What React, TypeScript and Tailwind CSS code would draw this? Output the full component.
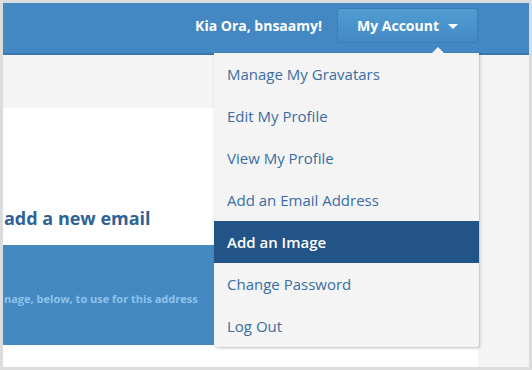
import React from "react";

const items = [
  "Manage My Gravatars",
  "Edit My Profile",
  "View My Profile",
  "Add an Email Address",
  "Add an Image",
  "Change Password",
  "Log Out",
];

export default function App() {
  const font = { fontFamily: "'Open Sans', Lato, Arial, sans-serif" };
  return (
    <div className="relative w-[532px] h-[370px] bg-[#dcdcdc] p-[3px] overflow-hidden" style={font}>
      <div className="flex flex-col w-full h-full bg-[#f4f4f4]">
        <header className="h-[52px] bg-[#4388c3] border-b-2 border-[#3a76ab] flex items-start justify-end pr-[51px] pt-[5px]">
          <span className="text-white font-bold text-[14px] leading-[35px] mr-[15px]">Kia Ora, bnsaamy!</span>
          <button className="h-[35px] w-[141px] rounded-[3px] border border-[#3c7db5] bg-gradient-to-b from-[#4f9dd3] to-[#4589c4] flex items-center pl-[19px] text-white font-bold text-[14px]">
            My Account
            <span className="ml-[9px] mt-[1px] w-0 h-0 border-l-[5px] border-r-[5px] border-t-[5px] border-l-transparent border-r-transparent border-t-white"></span>
          </button>
        </header>
        <div className="flex-1 flex flex-col">
          <div className="h-[53px]"></div>
          <div className="flex-1 w-[475px] bg-white flex flex-col">
            <h1 className="mt-[98px] pl-[1px] text-[18px] leading-[24px] font-bold text-[#2f6397]">add a new email</h1>
            <div className="mt-[15px] h-[100px] bg-[#4589c3] pt-[47px] pl-[1px]">
              <p className="text-[11px] leading-[14px] font-bold text-[#8cc3ea]">nage, below, to use for this address</p>
            </div>
          </div>
        </div>
      </div>
      <div className="absolute left-[214px] top-[53px] w-[265px] bg-[#f4f4f4] rounded-b-[3px] shadow-[1px_1px_3px_rgba(0,0,0,0.25)]">
        <span className="absolute -top-[6px] left-[218px] w-0 h-0 border-l-[6px] border-r-[6px] border-b-[6px] border-l-transparent border-r-transparent border-b-[#f4f4f4]"></span>
        {items.map((it) => (
          <div
            key={it}
            className={
              it === "Add an Image"
                ? "h-[42px] flex items-center pl-[13px] text-[15px] bg-[#235487] text-white font-semibold"
                : "h-[42px] flex items-center pl-[13px] text-[15px] text-[#3a6da3]"
            }
          >
            {it}
          </div>
        ))}
      </div>
    </div>
  );
}
